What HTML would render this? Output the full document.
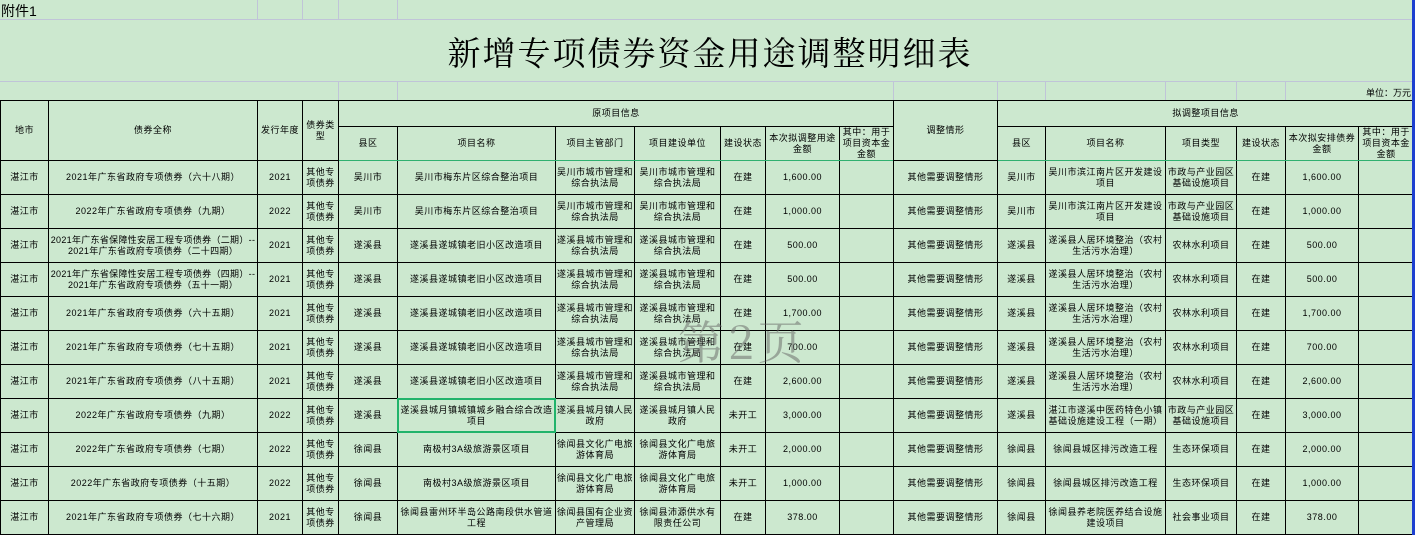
<!DOCTYPE html>
<html><head><meta charset="utf-8">
<style>
*{margin:0;padding:0;box-sizing:border-box}
body{width:1415px;height:535px;overflow:hidden;background:#cce8cf;position:relative;font-family:"Liberation Sans","Noto Sans CJK SC","WenQuanYi Zen Hei",sans-serif;color:#000}
.bar{position:absolute;left:1412px;top:0;width:3px;height:535px;background:#1c3fd0}
.g{position:absolute;background:#c0c4d8}
.att{position:absolute;left:1px;top:1px;font-size:14px}
.title{position:absolute;left:0;width:1412px;top:32px;text-align:center;font-family:"Noto Serif CJK SC","Liberation Serif",serif;font-size:33px;line-height:40px;letter-spacing:2px;padding-left:8px}
.unit{position:absolute;right:4px;top:86px;font-size:9px}
table{position:absolute;left:0;top:100px;border-collapse:collapse;table-layout:fixed;width:1413px}
td{border:1.5px solid #000;text-align:center;vertical-align:middle;font-size:9px;line-height:11px;letter-spacing:0.5px;overflow:hidden;padding:0;white-space:normal}
tr.h1 td{height:26px}
tr.h2 td{height:34px}
tr.h2 td{border-bottom:1.5px solid #2fb070}
tr.d td{height:34px}
.nw{white-space:nowrap;letter-spacing:0.3px}
.wm{position:absolute;left:678px;top:312px;font-family:"Noto Serif CJK SC",serif;font-size:46px;line-height:56px;color:rgba(100,100,100,.5);letter-spacing:4px}
.sel{position:absolute;left:397px;top:398px;width:159px;height:35px;border:2px solid #21b36b}
</style></head><body>
<div class="g" style="left:257px;top:0;width:1px;height:19px"></div>
<div class="g" style="left:302px;top:0;width:1px;height:19px"></div>
<div class="g" style="left:338px;top:0;width:1px;height:19px"></div>
<div class="g" style="left:397px;top:0;width:1px;height:19px"></div>
<div class="g" style="left:0;top:19px;width:1412px;height:1px"></div>
<div class="g" style="left:0;top:81px;width:1412px;height:1px"></div>
<div class="g" style="left:338px;top:81px;width:1px;height:19px"></div>
<div class="g" style="left:397px;top:81px;width:1px;height:19px"></div>
<div class="g" style="left:893px;top:81px;width:1px;height:19px"></div>
<div class="g" style="left:997px;top:81px;width:1px;height:19px"></div>
<div class="g" style="left:1045px;top:81px;width:1px;height:19px"></div>
<div class="g" style="left:1165px;top:81px;width:1px;height:19px"></div>
<div class="g" style="left:1236px;top:81px;width:1px;height:19px"></div>
<div class="g" style="left:1285px;top:81px;width:1px;height:19px"></div>
<div class="att">附件1</div>
<div class="title">新增专项债券资金用途调整明细表</div>
<div class="unit">单位：万元</div>
<table>
<colgroup><col style="width:48px"><col style="width:209px"><col style="width:45px"><col style="width:36px"><col style="width:59px"><col style="width:158px"><col style="width:79px"><col style="width:86px"><col style="width:45px"><col style="width:74px"><col style="width:54px"><col style="width:104px"><col style="width:48px"><col style="width:120px"><col style="width:71px"><col style="width:49px"><col style="width:73px"><col style="width:55px"></colgroup>
<tr class="h1"><td rowspan="2">地市</td><td rowspan="2">债券全称</td><td rowspan="2">发行年度</td><td rowspan="2">债券类型</td><td colspan="7">原项目信息</td><td rowspan="2">调整情形</td><td colspan="6">拟调整项目信息</td></tr>
<tr class="h2"><td>县区</td><td>项目名称</td><td>项目主管部门</td><td>项目建设单位</td><td>建设状态</td><td>本次拟调整用途金额</td><td>其中：用于项目资本金金额</td><td>县区</td><td>项目名称</td><td>项目类型</td><td>建设状态</td><td>本次拟安排债券金额</td><td>其中：用于项目资本金金额</td></tr>
<tr class="d"><td>湛江市</td><td>2021年广东省政府专项债券（六十八期）</td><td>2021</td><td>其他专项债券</td><td>吴川市</td><td>吴川市梅东片区综合整治项目</td><td>吴川市城市管理和综合执法局</td><td>吴川市城市管理和综合执法局</td><td>在建</td><td>1,600.00</td><td></td><td>其他需要调整情形</td><td>吴川市</td><td>吴川市滨江南片区开发建设项目</td><td>市政与产业园区基础设施项目</td><td>在建</td><td>1,600.00</td><td></td></tr>
<tr class="d"><td>湛江市</td><td>2022年广东省政府专项债券（九期）</td><td>2022</td><td>其他专项债券</td><td>吴川市</td><td>吴川市梅东片区综合整治项目</td><td>吴川市城市管理和综合执法局</td><td>吴川市城市管理和综合执法局</td><td>在建</td><td>1,000.00</td><td></td><td>其他需要调整情形</td><td>吴川市</td><td>吴川市滨江南片区开发建设项目</td><td>市政与产业园区基础设施项目</td><td>在建</td><td>1,000.00</td><td></td></tr>
<tr class="d"><td>湛江市</td><td class="nw">2021年广东省保障性安居工程专项债券（二期）--<br>2021年广东省政府专项债券（二十四期）</td><td>2021</td><td>其他专项债券</td><td>遂溪县</td><td>遂溪县遂城镇老旧小区改造项目</td><td>遂溪县城市管理和综合执法局</td><td>遂溪县城市管理和综合执法局</td><td>在建</td><td>500.00</td><td></td><td>其他需要调整情形</td><td>遂溪县</td><td>遂溪县人居环境整治（农村生活污水治理）</td><td>农林水利项目</td><td>在建</td><td>500.00</td><td></td></tr>
<tr class="d"><td>湛江市</td><td class="nw">2021年广东省保障性安居工程专项债券（四期）--<br>2021年广东省政府专项债券（五十一期）</td><td>2021</td><td>其他专项债券</td><td>遂溪县</td><td>遂溪县遂城镇老旧小区改造项目</td><td>遂溪县城市管理和综合执法局</td><td>遂溪县城市管理和综合执法局</td><td>在建</td><td>500.00</td><td></td><td>其他需要调整情形</td><td>遂溪县</td><td>遂溪县人居环境整治（农村生活污水治理）</td><td>农林水利项目</td><td>在建</td><td>500.00</td><td></td></tr>
<tr class="d"><td>湛江市</td><td>2021年广东省政府专项债券（六十五期）</td><td>2021</td><td>其他专项债券</td><td>遂溪县</td><td>遂溪县遂城镇老旧小区改造项目</td><td>遂溪县城市管理和综合执法局</td><td>遂溪县城市管理和综合执法局</td><td>在建</td><td>1,700.00</td><td></td><td>其他需要调整情形</td><td>遂溪县</td><td>遂溪县人居环境整治（农村生活污水治理）</td><td>农林水利项目</td><td>在建</td><td>1,700.00</td><td></td></tr>
<tr class="d"><td>湛江市</td><td>2021年广东省政府专项债券（七十五期）</td><td>2021</td><td>其他专项债券</td><td>遂溪县</td><td>遂溪县遂城镇老旧小区改造项目</td><td>遂溪县城市管理和综合执法局</td><td>遂溪县城市管理和综合执法局</td><td>在建</td><td>700.00</td><td></td><td>其他需要调整情形</td><td>遂溪县</td><td>遂溪县人居环境整治（农村生活污水治理）</td><td>农林水利项目</td><td>在建</td><td>700.00</td><td></td></tr>
<tr class="d"><td>湛江市</td><td>2021年广东省政府专项债券（八十五期）</td><td>2021</td><td>其他专项债券</td><td>遂溪县</td><td>遂溪县遂城镇老旧小区改造项目</td><td>遂溪县城市管理和综合执法局</td><td>遂溪县城市管理和综合执法局</td><td>在建</td><td>2,600.00</td><td></td><td>其他需要调整情形</td><td>遂溪县</td><td>遂溪县人居环境整治（农村生活污水治理）</td><td>农林水利项目</td><td>在建</td><td>2,600.00</td><td></td></tr>
<tr class="d"><td>湛江市</td><td>2022年广东省政府专项债券（九期）</td><td>2022</td><td>其他专项债券</td><td>遂溪县</td><td>遂溪县城月镇城镇城乡融合综合改造项目</td><td>遂溪县城月镇人民政府</td><td>遂溪县城月镇人民政府</td><td>未开工</td><td>3,000.00</td><td></td><td>其他需要调整情形</td><td>遂溪县</td><td>湛江市遂溪中医药特色小镇基础设施建设工程（一期）</td><td>市政与产业园区基础设施项目</td><td>在建</td><td>3,000.00</td><td></td></tr>
<tr class="d"><td>湛江市</td><td>2022年广东省政府专项债券（七期）</td><td>2022</td><td>其他专项债券</td><td>徐闻县</td><td>南极村3A级旅游景区项目</td><td>徐闻县文化广电旅游体育局</td><td>徐闻县文化广电旅游体育局</td><td>未开工</td><td>2,000.00</td><td></td><td>其他需要调整情形</td><td>徐闻县</td><td>徐闻县城区排污改造工程</td><td>生态环保项目</td><td>在建</td><td>2,000.00</td><td></td></tr>
<tr class="d"><td>湛江市</td><td>2022年广东省政府专项债券（十五期）</td><td>2022</td><td>其他专项债券</td><td>徐闻县</td><td>南极村3A级旅游景区项目</td><td>徐闻县文化广电旅游体育局</td><td>徐闻县文化广电旅游体育局</td><td>未开工</td><td>1,000.00</td><td></td><td>其他需要调整情形</td><td>徐闻县</td><td>徐闻县城区排污改造工程</td><td>生态环保项目</td><td>在建</td><td>1,000.00</td><td></td></tr>
<tr class="d"><td>湛江市</td><td>2021年广东省政府专项债券（七十六期）</td><td>2021</td><td>其他专项债券</td><td>徐闻县</td><td>徐闻县雷州环半岛公路南段供水管道工程</td><td>徐闻县国有企业资产管理局</td><td>徐闻县沛源供水有限责任公司</td><td>在建</td><td>378.00</td><td></td><td>其他需要调整情形</td><td>徐闻县</td><td>徐闻县养老院医养结合设施建设项目</td><td>社会事业项目</td><td>在建</td><td>378.00</td><td></td></tr>
</table>
<div class="wm">第2页</div>
<div class="sel"></div>
<div class="bar"></div>
</body></html>
